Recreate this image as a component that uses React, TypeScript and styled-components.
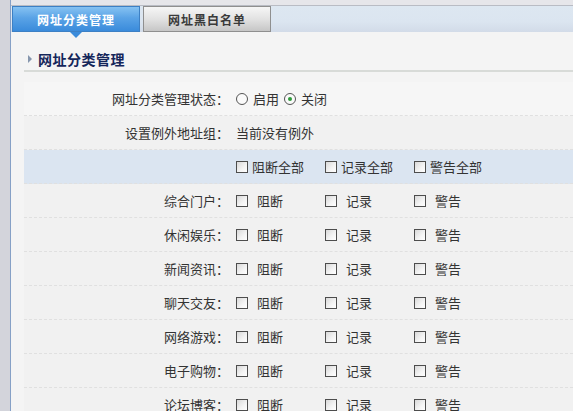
import React from "react";
import styled, { createGlobalStyle } from "styled-components";

const Global = createGlobalStyle`
  html, body { margin: 0; padding: 0; background: #f4f4f4; }
  body { font-family: "Noto Sans CJK SC", "Noto Sans", sans-serif; font-size: 13px; color: #333; }
`;

const Page = styled.div`
  display: flex;
  width: 573px;
  height: 411px;
  overflow: hidden;
`;

const LeftStrip = styled.div`
  width: 10px;
  flex: none;
  background: #d3d4db;
  border-right: 1px solid #86a0c6;
`;

const Main = styled.div`
  flex: 1;
  display: flex;
  flex-direction: column;
  min-width: 0;
`;

const TopBand = styled.div`
  flex: none;
  height: 5px;
  background: #e6e6ea;
  border-bottom: 1px solid #b9bcc4;
`;

const TabBar = styled.div`
  flex: none;
  height: 26px;
  display: flex;
  align-items: stretch;
  gap: 3px;
  padding-left: 1px;
  position: relative;
  z-index: 1;
  background: linear-gradient(#dde7f1 0%, #dbe5f0 60%, #d2dbe8 100%);
`;

const Tab = styled.div<{ $active?: boolean }>`
  position: relative;
  width: 126px;
  display: flex;
  align-items: center;
  justify-content: center;
  font-size: 12px;
  font-weight: bold;
  letter-spacing: 1px;
  border: 1px solid ${(p) => (p.$active ? "#3d80c4" : "#8f8f8f")};
  color: ${(p) => (p.$active ? "#ffffff" : "#3a3a3a")};
  background: ${(p) =>
    p.$active
      ? "linear-gradient(#86c2f2 0%, #5aa3e6 45%, #3a8bdb 100%)"
      : "linear-gradient(#f6f6f6 0%, #e2e2e2 50%, #c6c6c6 100%)"};
`;

const TabPointer = styled.span`
  position: absolute;
  left: 50%;
  bottom: -7px;
  margin-left: -6px;
  width: 0;
  height: 0;
  border-left: 6px solid transparent;
  border-right: 6px solid transparent;
  border-top: 6px solid #3a8bdb;
`;

const Panel = styled.div`
  flex: 1;
  min-height: 0;
  background: #f4f4f4;
  padding-left: 13px;
`;

const SectionTitle = styled.div`
  margin-top: 16px;
  height: 22px;
  display: flex;
  align-items: center;
  gap: 6px;
  padding-left: 4px;
  font-size: 14px;
  font-weight: bold;
  letter-spacing: 0.5px;
  color: #14265a;
  border-bottom: 2px solid #d8dbd8;
`;

const Arrow = styled.span`
  width: 0;
  height: 0;
  border-top: 4px solid transparent;
  border-bottom: 4px solid transparent;
  border-left: 4px solid #8696ad;
`;

const Rows = styled.div`
  margin-top: 10px;
  display: flex;
  flex-direction: column;
`;

const Row = styled.div<{ $variant?: "plain" | "gray" | "head" }>`
  flex: none;
  height: 33px;
  display: grid;
  grid-template-columns: 205px 1fr;
  column-gap: 7px;
  align-items: center;
  border-bottom: 1px dashed #e0e0e0;
  background: ${(p) =>
    p.$variant === "head" ? "#dbe5f1" : p.$variant === "gray" ? "#f1f1f1" : "#f6f6f6"};
`;

const Label = styled.div`
  text-align: right;
  white-space: nowrap;
  color: #333;
`;

const Values = styled.div`
  display: flex;
  align-items: center;
  white-space: nowrap;
`;

const Option = styled.label<{ $width?: number; $gap?: number }>`
  display: flex;
  align-items: center;
  gap: ${(p) => p.$gap ?? 9}px;
  width: ${(p) => (p.$width ? `${p.$width}px` : "auto")};
  margin-right: ${(p) => (p.$width ? 0 : 5)}px;
`;

const Box = styled.span`
  width: 10px;
  height: 10px;
  flex: none;
  border: 1px solid #4d4d4d;
  background: linear-gradient(135deg, #d9d9d9 0%, #f4f4f4 60%, #ffffff 100%);
`;

const Radio = styled.span<{ $checked?: boolean }>`
  width: 10px;
  height: 10px;
  flex: none;
  border: 1px solid #555;
  border-radius: 50%;
  background: #fafafa;
  display: flex;
  align-items: center;
  justify-content: center;
  &::after {
    content: "";
    display: ${(p) => (p.$checked ? "block" : "none")};
    width: 4px;
    height: 4px;
    border-radius: 50%;
    background: #2f9a3a;
  }
`;

const categories = ["综合门户", "休闲娱乐", "新闻资讯", "聊天交友", "网络游戏", "电子购物", "论坛博客"];

export default function App() {
  return (
    <>
      <Global />
      <Page>
        <LeftStrip />
        <Main>
          <TopBand />
          <TabBar>
            <Tab $active>
              网址分类管理
              <TabPointer />
            </Tab>
            <Tab>网址黑白名单</Tab>
          </TabBar>
          <Panel>
            <SectionTitle>
              <Arrow />
              网址分类管理
            </SectionTitle>
            <Rows>
              <Row $variant="plain">
                <Label>网址分类管理状态：</Label>
                <Values>
                  <Option $gap={5}>
                    <Radio />
                    启用
                  </Option>
                  <Option $gap={5}>
                    <Radio $checked />
                    关闭
                  </Option>
                </Values>
              </Row>
              <Row $variant="gray">
                <Label>设置例外地址组：</Label>
                <Values>当前没有例外</Values>
              </Row>
              <Row $variant="head">
                <Label />
                <Values>
                  <Option $width={89} $gap={4}>
                    <Box />
                    阻断全部
                  </Option>
                  <Option $width={89} $gap={4}>
                    <Box />
                    记录全部
                  </Option>
                  <Option $width={89} $gap={4}>
                    <Box />
                    警告全部
                  </Option>
                </Values>
              </Row>
              {categories.map((c) => (
                <Row key={c} $variant="gray">
                  <Label>{c}：</Label>
                  <Values>
                    <Option $width={89}>
                      <Box />
                      阻断
                    </Option>
                    <Option $width={89}>
                      <Box />
                      记录
                    </Option>
                    <Option $width={89}>
                      <Box />
                      警告
                    </Option>
                  </Values>
                </Row>
              ))}
            </Rows>
          </Panel>
        </Main>
      </Page>
    </>
  );
}
